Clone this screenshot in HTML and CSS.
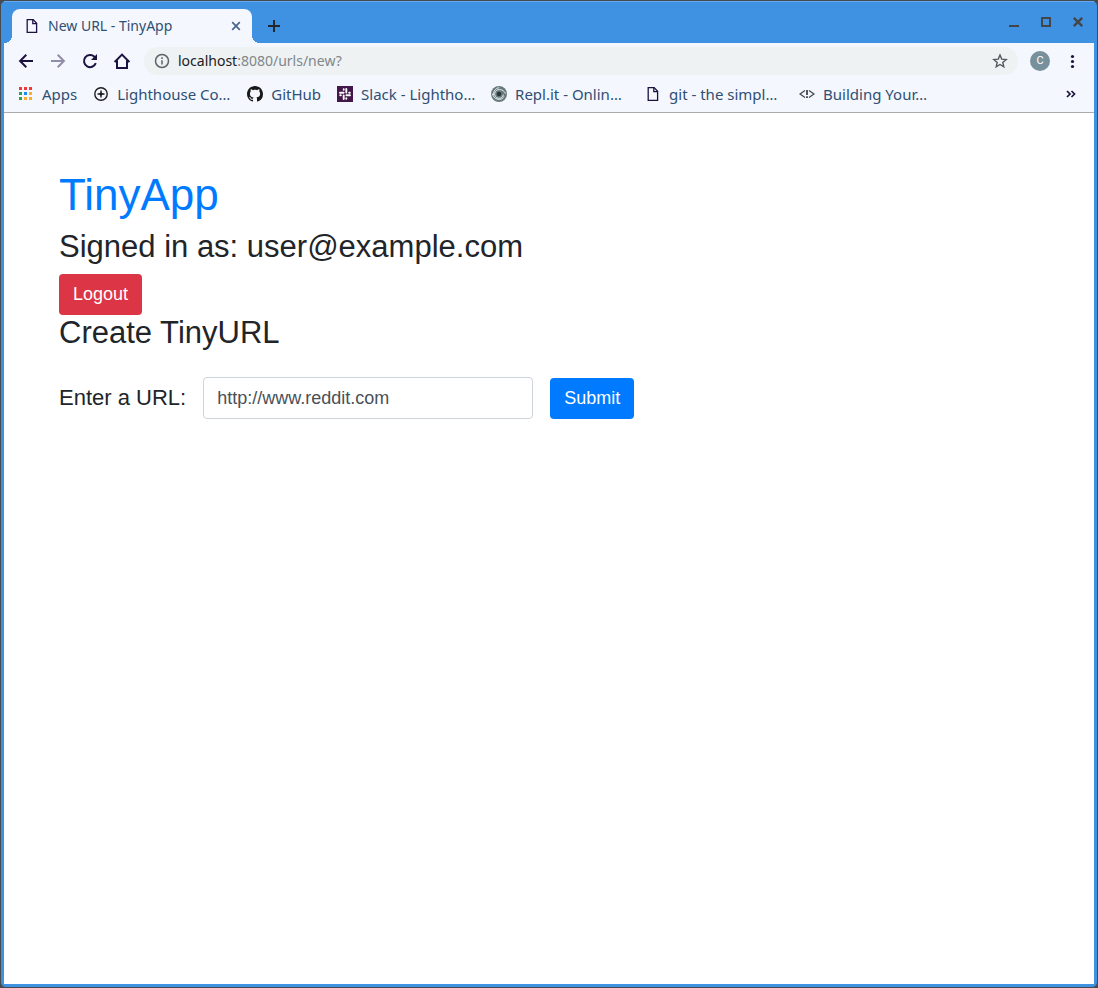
FILE: index.html
```html
<!DOCTYPE html>
<html lang="en">
<head>
<meta charset="utf-8">
<title>New URL - TinyApp</title>
<link rel="stylesheet" href="styles.css">
</head>
<body>
<div class="window">
  <header class="chrome">
    <div class="tab-strip">
      <div class="tab">
        <svg class="icon" viewBox="0 0 16 16" fill="none" stroke="#1c1240" stroke-width="1.3"><path d="M3.2 1.6h6l3.4 3.6v9.2H3.2z"/><path d="M8.8 1.6v4h4"/></svg>
        <span class="tab-title">New URL - TinyApp</span>
        <button class="icon-button tab-close" aria-label="Close tab"><svg class="icon" viewBox="0 0 16 16" stroke="#46658a" stroke-width="1.7"><path d="M4.2 4.2l7.6 7.6M11.8 4.2l-7.6 7.6"/></svg></button>
      </div>
      <button class="icon-button new-tab" aria-label="New tab"><svg class="icon" viewBox="0 0 16 16" stroke="#22282e" stroke-width="2"><path d="M8 2v12M2 8h12"/></svg></button>
      <div class="window-controls">
        <button class="icon-button" aria-label="Minimize"><svg class="icon" viewBox="0 0 16 16" stroke="#434547" stroke-width="2"><path d="M3 12h10"/></svg></button>
        <button class="icon-button" aria-label="Maximize"><svg class="icon" viewBox="0 0 16 16" fill="none" stroke="#434547" stroke-width="2"><path d="M4 4h8v8H4z"/></svg></button>
        <button class="icon-button" aria-label="Close"><svg class="icon" viewBox="0 0 16 16" stroke="#434547" stroke-width="2.4"><path d="M3.8 3.8l8.4 8.4M12.2 3.8l-8.4 8.4"/></svg></button>
      </div>
    </div>
    <div class="toolbar">
      <button class="icon-button" aria-label="Back"><svg class="icon" viewBox="0 0 16 16" fill="none" stroke="#1c1240" stroke-width="2"><path d="M15 8H2.5M8.3 1.8L2.1 8l6.2 6.2"/></svg></button>
      <button class="icon-button" aria-label="Forward"><svg class="icon" viewBox="0 0 16 16" fill="none" stroke="#918da8" stroke-width="2"><path d="M1 8h12.5M7.7 1.8L13.9 8l-6.2 6.2"/></svg></button>
      <button class="icon-button" aria-label="Reload"><svg class="icon" viewBox="0 0 16 16" fill="none" stroke="#1c1240" stroke-width="2"><path d="M13.8 10.2A6.1 6.1 0 1 1 12.4 3.7l1.4 1.4"/><path d="M15 1v6H9z" fill="#1c1240" stroke="none"/></svg></button>
      <button class="icon-button" aria-label="Home"><svg class="icon" viewBox="0 0 16 16" fill="none" stroke="#1c1240" stroke-width="2"><path d="M.6 9L8 1.6 15.4 9M3 7.6V15h10V7.6"/></svg></button>
      <div class="address-bar">
        <svg class="icon" viewBox="0 0 16 16" fill="none" stroke="#5f6368" stroke-width="1.5"><circle cx="8" cy="8" r="6.5"/><path d="M8 7.2v4.2M8 4.3v1.7"/></svg>
        <span class="address"><span class="address-host">localhost</span>:8080/urls/new?</span>
        <button class="icon-button" aria-label="Bookmark this page"><svg class="icon" viewBox="0 0 16 16" fill="none" stroke="#55585c" stroke-width="1.4"><path d="M8 2l1.7 4.1 4.5.4-3.4 2.9 1 4.4L8 11.5l-3.8 2.3 1-4.4-3.4-2.9 4.5-.4z"/></svg></button>
      </div>
      <button class="avatar" aria-label="Profile">C</button>
      <button class="icon-button" aria-label="Menu"><svg class="icon" viewBox="0 0 16 16" fill="#1c1240"><circle cx="8.500" cy="3.500" r="1.6"/><circle cx="8.500" cy="8.500" r="1.6"/><circle cx="8.500" cy="13.500" r="1.6"/></svg></button>
    </div>
    <nav class="bookmarks" aria-label="Bookmarks">
      <a class="bookmark" href="#"><svg class="icon" viewBox="0 0 16 16"><path fill="#ee3b35" d="M1 1h3v3H1zM6 1h3v3H6zM11 1h3v3h-3z"/><path fill="#2f9e55" d="M1 6h3v3H1zM1 11h3v3H1z"/><path fill="#168cf2" d="M6 6h3v3H6z"/><path fill="#fbab30" d="M11 6h3v3h-3zM11 11h3v3h-3zM6 11h3v3H6z"/></svg><span>Apps</span></a>
      <a class="bookmark" href="#"><svg class="icon" viewBox="0 0 16 16" fill="none" stroke="#1d1d1f" stroke-width="1.4"><circle cx="8" cy="8" r="6.2"/><path d="M8 4.5v7M4.5 8h7" stroke-width="1.4"/><path d="M8 6L10 8 8 10 6 8z" fill="#1d1d1f" stroke="none"/></svg><span class="bookmark-long">Lighthouse Co…</span></a>
      <a class="bookmark" href="#"><svg class="icon" viewBox="0 0 16 16"><path fill="#191717" d="M8 0C3.580 0 0 3.580 0 8c0 3.540 2.290 6.530 5.470 7.590.4.070.55-.17.55-.38 0-.19-.01-.82-.01-1.490-2.010.37-2.530-.49-2.690-.94-.09-.23-.48-.94-.82-1.130-.28-.15-.68-.52-.01-.53.63-.01 1.080.58 1.230.82.72 1.210 1.870.87 2.330.66.070-.52.28-.87.51-1.070-1.780-.2-3.640-.89-3.640-3.950 0-.87.31-1.590.82-2.150-.08-.2-.36-1.020.08-2.120 0 0 .67-.21 2.200.82.64-.18 1.320-.27 2-.27s1.360.09 2 .27c1.530-1.040 2.200-.82 2.200-.82.44 1.100.16 1.920.08 2.120.51.56.82 1.270.82 2.150 0 3.070-1.870 3.750-3.650 3.950.29.25.54.73.54 1.480 0 1.070-.01 1.930-.01 2.200 0 .21.15.46.55.38A8.010 8.010 0 0 0 16 8c0-4.420-3.580-8-8-8z"/></svg><span>GitHub</span></a>
      <a class="bookmark" href="#"><svg class="icon" viewBox="0 0 16 16"><path fill="#43174a" d="M0 0h16v16H0z"/><g stroke="#fff" stroke-width="1.9" stroke-linecap="round"><path d="M3 6.700h3.600M9.300 3v3.600M13 9.300H9.400M6.700 13V9.400"/><path d="M6.700 3.200v.6M12.800 6.700h-.6M9.300 12.800v-.6M3.200 9.300h.6"/></g></svg><span class="bookmark-long">Slack - Lightho…</span></a>
      <a class="bookmark" href="#"><svg class="icon" viewBox="0 0 16 16" fill="none"><circle cx="8" cy="8" r="8" fill="#68797c"/><g stroke="#e4ecee" stroke-width="1"><path d="M12.400 8.600A4.400 4.400 0 1 1 8.600 3.600C11 3.600 13.400 5 14.500 7.600"/><path d="M1.200 7.500C2.300 11.300 5 13.500 8.500 13.400c2.200-.1 3.700-1.300 4.400-3"/><path d="M2.600 9C2.100 5.500 4.300 2.200 8.200 1.700"/></g><circle cx="8" cy="8" r="2.200" fill="#2c3437"/></svg><span class="bookmark-long">Repl.it - Onlin…</span></a>
      <a class="bookmark" href="#"><svg class="icon" viewBox="0 0 16 16" fill="none" stroke="#1c1240" stroke-width="1.300"><path d="M3.200 1.600h6l3.400 3.600v9.200H3.200z"/><path d="M8.800 1.600v4h4"/></svg><span class="bookmark-long">git - the simpl…</span></a>
      <a class="bookmark" href="#"><svg class="icon" viewBox="0 0 16 16" fill="none" stroke="#3f4449" stroke-width="1.200"><path d="M6 4.600L1 8l5 3.400M10 4.600L15 8l-5 3.400"/><path d="M8 4v5M8 10.300V12" stroke-width="1.800"/></svg><span class="bookmark-long">Building Your…</span></a>
      <button class="icon-button more" aria-label="More bookmarks"><svg class="icon" viewBox="0 0 16 16" fill="none" stroke="#1c1240" stroke-width="1.700"><path d="M4 5l3 3-3 3M8.500 5l3 3-3 3"/></svg></button>
    </nav>
  </header>
  <main class="page">
    <h1 class="brand"><a href="#">TinyApp</a></h1>
    <h2 class="heading">Signed in as: user@example.com</h2>
    <button class="button button-danger">Logout</button>
    <h2 class="heading create-heading">Create TinyURL</h2>
    <form class="url-form">
      <label for="long-url">Enter a URL:</label>
      <input class="url-input" id="long-url" type="text" value="http://www.reddit.com">
      <button class="button button-primary" type="button">Submit</button>
    </form>
  </main>
</div>
</body>
</html>
```
FILE: styles.css
```css
* { box-sizing: border-box; }

body {
  margin: 0;
  background: #464b50;
  font-family: "Liberation Sans", Arial, sans-serif;
  color: #212529;
}

button { font: inherit; cursor: pointer; }
a { text-decoration: none; }

.window {
  display: flex;
  flex-direction: column;
  min-height: 100vh;
  border: 1px solid #464b50;
  border-radius: 6px;
  background: #3f92e2;
  padding: 0 3px 3px;
}

.chrome {
  font-family: "Noto Sans", "Open Sans", sans-serif;
  font-size: 15px;
  line-height: 20px;
  color: #2f4f74;
}

.icon { display: block; flex: none; width: 16px; height: 16px; }

.icon-button {
  flex: none;
  border: 0;
  padding: 0;
  background: none;
}

.tab-strip {
  display: flex;
  align-items: center;
  height: 42px;
  padding: 8px 8px 0;
  box-shadow: inset 0 1px #63aaf0;
}

.tab {
  position: relative;
  display: flex;
  align-items: center;
  gap: 8px;
  width: 240px;
  height: 34px;
  padding: 0 8px 0 12px;
  border-radius: 8px 8px 0 0;
  background: #f4f7fd;
}

.tab::before,
.tab::after {
  content: "";
  position: absolute;
  bottom: 0;
  width: 8px;
  height: 8px;
}

.tab::before {
  right: 100%;
  background: radial-gradient(circle at 0 0, transparent 8px, #f4f7fd 8px);
}

.tab::after {
  left: 100%;
  background: radial-gradient(circle at 100% 0, transparent 8px, #f4f7fd 8px);
}

.tab-title { flex: 1; font-size: 14px; white-space: nowrap; }

.new-tab { margin-left: 14px; }

.window-controls {
  display: flex;
  gap: 16px;
  margin-left: auto;
  padding-bottom: 8px;
}

.toolbar {
  display: flex;
  align-items: center;
  gap: 16px;
  height: 36px;
  padding: 0 14px;
  background: #f4f7fd;
}

.address-bar {
  display: flex;
  flex: 1;
  align-items: center;
  gap: 8px;
  height: 28px;
  margin: 0 -4px 0 -2px;
  padding: 0 10px;
  border-radius: 14px;
  background: #eef2f3;
}

.address { flex: 1; font-size: 14px; color: #80868b; }
.address-host { color: #202124; }

.avatar {
  width: 20px;
  height: 20px;
  margin-right: -2px;
  border: 0;
  border-radius: 50%;
  padding: 0;
  background: #78909c;
  color: #fff;
  font-family: Roboto, sans-serif;
  font-size: 11px;
  line-height: 20px;
}

.bookmarks {
  display: flex;
  align-items: center;
  gap: 16px;
  height: 34px;
  padding: 0 15px 4px 14px;
  border-bottom: 1px solid #a9abae;
  background: #f4f7fd;
}

.bookmark {
  display: flex;
  align-items: center;
  gap: 8px;
  color: inherit;
  white-space: nowrap;
}

.bookmark-long { width: 114px; }
.more { margin-left: auto; }

.page {
  flex: 1;
  padding: 55px;
  background: #fff;
}

.brand,
.heading {
  font-weight: 400;
  line-height: 37px;
}

.brand { margin: 0 0 7px; font-size: 44px; line-height: 53px; }
.brand a { color: #007bff; }
.heading { margin: 0 0 9px; font-size: 31px; }
.create-heading { margin: -1px 0 26px; }

.button {
  display: block;
  height: 41px;
  padding: 0 14px;
  border: 0;
  border-radius: 4px;
  color: #fff;
  font-size: 18px;
}

.button-danger { background: #dc3545; }
.button-primary { background: #007bff; }

.url-form {
  display: flex;
  flex-wrap: wrap;
  align-items: center;
  gap: 17px;
  font-size: 22px;
}

.url-input {
  width: 330px;
  height: 42px;
  padding: 0 13px;
  border: 1px solid #ced4da;
  border-radius: 4px;
  color: #495057;
  font-family: inherit;
  font-size: 18px;
}
```
